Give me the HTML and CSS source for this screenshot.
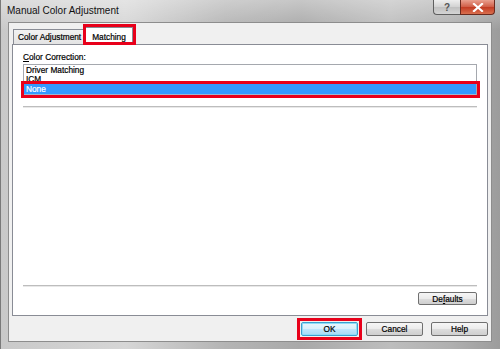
FILE: index.html
```html
<html>
<head>
  <link rel="stylesheet" href="styles.css">
</head>
<body>
  <div class="window">
    <div class="titlebar">
      <span class="title">Manual Color Adjustment</span>
      <div class="caption-buttons">
        <span class="caption help">?</span>
        <span class="caption close">
          <svg width="12" height="9" viewBox="0 0 12 9"><path d="M2 1 L10 8 M10 1 L2 8" stroke="#fff" stroke-width="2.2" stroke-linecap="square"/></svg>
        </span>
      </div>
    </div>

    <div class="client">
      <div class="tabs">
        <div class="tab">Color Adjustment</div>
        <div class="tab active mark mark-tab">Matching</div>
      </div>

      <div class="panel">
        <div class="label"><u>C</u>olor Correction:</div>
        <div class="listbox">
          <div class="item">Driver Matching</div>
          <div class="item">ICM</div>
          <div class="item selected mark mark-item">None</div>
        </div>
        <div class="separator"></div>
        <div class="spacer"></div>
        <div class="separator"></div>
        <div class="panel-actions">
          <button class="btn">De<u>f</u>aults</button>
        </div>
      </div>

      <div class="actions">
        <button class="btn default mark mark-btn">OK</button>
        <button class="btn">Cancel</button>
        <button class="btn">Help</button>
      </div>
    </div>
  </div>
</body>
</html>
```

FILE: styles.css
```css
body {
  margin: 0;
  font-family: "Liberation Sans", Arial, sans-serif;
  font-size: 8.3px;
  color: #000;
}

.window {
  width: 500px;
  height: 349px;
  box-sizing: border-box;
  display: flex;
  flex-direction: column;
  padding-bottom: 7px;
  background:
    linear-gradient(180deg, rgba(255,255,255,0.35), rgba(255,255,255,0) 30px),
    linear-gradient(90deg, #c9c9c9 0, #d6d6d6 25%, #b4b4b4 45%, #a9a9a9 60%, #bdbdbd 78%, #b0b0b0 90%, #9c9c9c 100%);
  border-left: 1px solid #7a7a7a;
}

.titlebar {
  height: 22px;
  display: flex;
  align-items: flex-start;
  justify-content: space-between;
}

.title {
  font-size: 10px;
  padding: 5px 0 0 6px;
  color: #111;
}

.caption-buttons {
  display: flex;
  margin-right: 5px;
}

.caption {
  height: 15px;
  display: flex;
  align-items: center;
  justify-content: center;
  box-sizing: border-box;
  border: 1px solid #5f5f5f;
  border-top: none;
}

.caption.help {
  width: 27px;
  border-radius: 0 0 0 4px;
  border-right: none;
  background: linear-gradient(180deg, #eeeeee, #d2d2d2 50%, #c0c0c0 51%, #d4d4d4);
  color: #555;
  font-weight: bold;
  font-size: 10px;
}

.caption.close {
  width: 35px;
  border-radius: 0 0 4px 0;
  background: linear-gradient(180deg, #e9a08f, #d05c45 50%, #c23a22 51%, #d9704f);
  border-color: #6b2a1e;
}

.client {
  flex: 1;
  margin: 0 8px 0 7px;
  display: flex;
  flex-direction: column;
  padding: 4px 3px 5px 3px;
  background-color: #f0f0f0;
  border: 1px solid #8d8d8d;
  -webkit-text-stroke: 0.2px #000;
}

.tabs {
  display: flex;
  align-items: flex-end;
  height: 17px;
  padding-left: 1px;
}

.tab {
  position: relative;
  height: 15px;
  box-sizing: border-box;
  padding: 0 4px;
  display: flex;
  align-items: center;
  border: 1px solid #898c95;
  border-bottom: none;
  background: linear-gradient(180deg, #f2f2f2, #e3e3e3);
  margin-right: -1px;
}

.tab.active {
  height: 18px;
  padding: 0 6px;
  margin-bottom: -1px;
  background-color: #fff;
  background-image: none;
  z-index: 1;
}

.panel {
  flex: 1;
  display: flex;
  flex-direction: column;
  padding: 7px 10px 10px 10px;
  background-color: #fff;
  border: 1px solid #898c95;
}

.label {
  line-height: 11px;
}

.listbox {
  margin-top: 1px;
  border: 1px solid #a5a8ae;
  border-bottom-color: #c8c8c8;
  padding: 1px 0 1px 0;
}

.item {
  position: relative;
  height: 9px;
  line-height: 9px;
  padding-left: 2px;
}

.item.selected {
  height: 10px;
  line-height: 10px;
  background-color: #3399ff;
  color: #fff;
  -webkit-text-stroke: 0.2px #fff;
  border-bottom: 1px solid #9cb6d0;
}

.separator {
  height: 1px;
  background-color: #bdbdbd;
  border-bottom: 1px solid #e8e8e8;
}

.listbox + .separator {
  margin-top: 9px;
}

.spacer {
  flex: 1;
}

.panel-actions {
  display: flex;
  justify-content: flex-end;
  margin-top: 5px;
}

.actions {
  display: flex;
  justify-content: flex-end;
  gap: 8px;
  margin-top: 6px;
}

.btn {
  position: relative;
  width: 57px;
  height: 14px;
  padding: 0;
  font-family: inherit;
  font-size: 8.3px;
  color: #000;
  border: 1px solid #707070;
  border-radius: 2px;
  background: linear-gradient(180deg, #f6f6f6, #ebebeb 50%, #dddddd 51%, #cfcfcf);
}

.panel-actions .btn {
  width: 59px;
  height: 13px;
}

.btn.default {
  border-color: #3c9fcf;
  background: linear-gradient(180deg, #eaf6fd, #d9f0fc 50%, #bee6fd 51%, #a7d9f5);
  box-shadow: inset 0 0 0 1px #8fdcf7;
}

/* red highlight frames */
.mark::after {
  content: "";
  position: absolute;
  border: 3px solid #e8001a;
  pointer-events: none;
}

.mark-tab::after {
  top: -4px;
  bottom: 0;
  left: -3px;
  right: -4px;
}

.mark-item::after {
  top: -3px;
  bottom: -4px;
  left: -3px;
  right: -4px;
}

.mark-btn::after {
  top: -5px;
  bottom: -5px;
  left: -5px;
  right: -5px;
}
```
